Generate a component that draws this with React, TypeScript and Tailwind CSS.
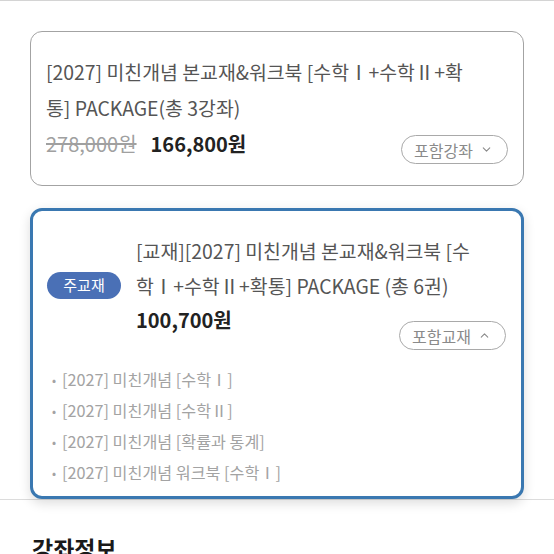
import { ChevronDown, ChevronUp } from "lucide-react";

const FONT = {
  fontFamily: '"Noto Sans CJK KR", "Noto Sans", sans-serif',
};

const books = [
  "[2027] 미친개념 [수학Ⅰ]",
  "[2027] 미친개념 [수학Ⅱ]",
  "[2027] 미친개념 [확률과 통계]",
  "[2027] 미친개념 워크북 [수학Ⅰ]",
  "[2027] 미친개념 워크북 [수학Ⅱ]",
  "[2027] 미친개념 워크북 [확률과 통계]",
];

function PillButton({ label, open }: { label: string; open?: boolean }) {
  return (
    <button
      type="button"
      className="inline-flex h-[29px] items-center gap-[7px] rounded-full border border-[#a9a9a9] bg-white pl-[12px] pr-[14px] text-[16px] text-[#8a8a8a]"
    >
      {label}
      {open ? (
        <ChevronUp size={13} strokeWidth={2} />
      ) : (
        <ChevronDown size={13} strokeWidth={2} />
      )}
    </button>
  );
}

export default function App() {
  return (
    <div className="h-[554px] w-[554px] overflow-hidden bg-white" style={FONT}>
      <div className="border-t border-[#d4d4d4]" />

      <div className="border-b border-[#dcdcdc] px-[30px] pt-[30px]">
        {/* package card */}
        <div className="rounded-[12px] border border-[#a3a3a3] px-[15px] pb-[21px] pt-[22px]">
          <p className="max-w-[440px] break-all text-[19.4px] leading-[36px] text-[#555]">
            [2027] 미친개념 본교재&amp;워크북 [수학Ⅰ+수학Ⅱ+확통] PACKAGE(총 3강좌)
          </p>
          <div className="flex items-start justify-between">
            <div className="flex items-center gap-[14px] leading-[36px]">
              <span className="text-[20px] text-[#a0a0a0] line-through">278,000원</span>
              <span className="text-[20px] font-bold text-[#222]">166,800원</span>
            </div>
            <div className="mt-[9px]">
              <PillButton label="포함강좌" />
            </div>
          </div>
        </div>

        {/* book card */}
        <div className="mt-[22px] h-[291px] overflow-hidden rounded-[12px] border-[3px] border-[#3a78b1] bg-white pt-[22px] shadow-[0_4px_12px_rgba(0,0,0,0.14)]">
          <div className="px-[14px]">
            <div className="flex items-center gap-[15px]">
              <span className="inline-flex h-[27px] w-[74px] shrink-0 items-center justify-center rounded-full bg-[#4a70b6] text-[15px] text-white">
                주교재
              </span>
              <div className="w-[340px]">
                <p className="break-all text-[19.4px] leading-[35px] text-[#555]">
                  [교재][2027] 미친개념 본교재&amp;워크북 [수학Ⅰ+수학Ⅱ+확통] PACKAGE (총 6권)
                </p>
                <p className="text-[20px] font-bold leading-[34px] text-[#222]">100,700원</p>
              </div>
            </div>
            <div className="-mt-[16px] flex justify-end pr-[1px]">
              <PillButton label="포함교재" open />
            </div>
          </div>
          <ul className="mt-[14px] pl-[19px]">
            {books.map((b) => (
              <li key={b} className="flex gap-[6px] text-[16.2px] leading-[31px] text-[#a3a3a3]">
                <span className="text-[12px]">•</span>
                <span>{b}</span>
              </li>
            ))}
          </ul>
        </div>
      </div>

      <div className="px-[32px] pt-[30px]">
        <h2 className="text-[23px] font-bold leading-[36px] text-[#1a1a1a]">강좌정보</h2>
      </div>
    </div>
  );
}
